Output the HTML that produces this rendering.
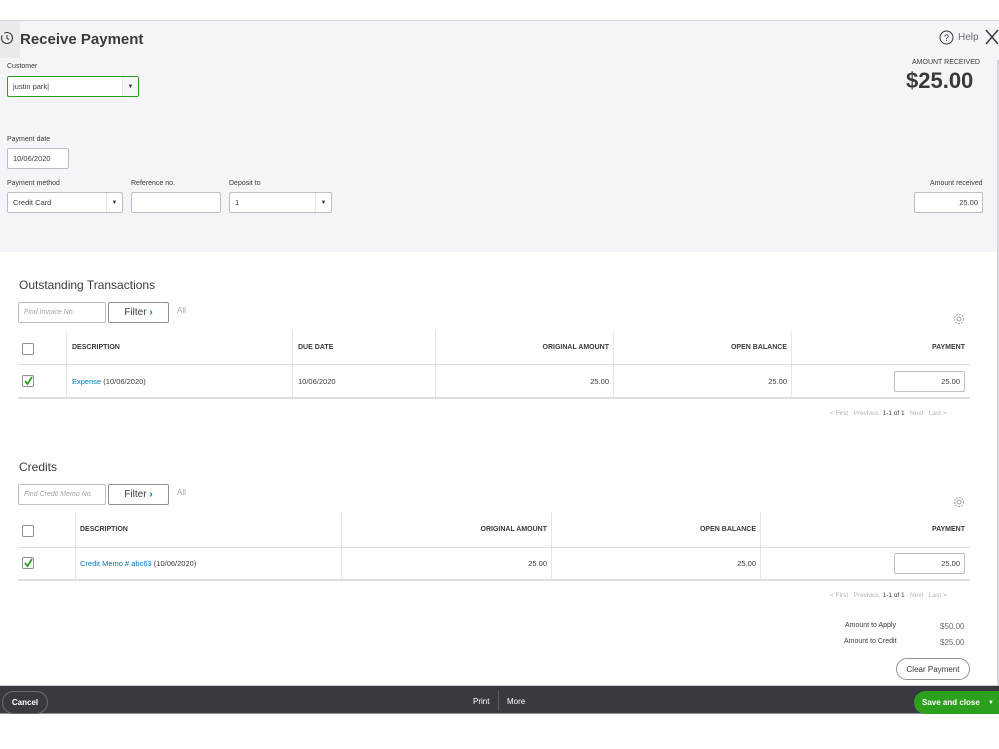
<!DOCTYPE html>
<html><head><meta charset="utf-8"><style>
*{box-sizing:border-box;margin:0;padding:0}
body{width:999px;height:749px;position:relative;overflow:hidden;background:#fff;font-family:"Liberation Sans",sans-serif;color:#393a3d}
.a{position:absolute}
.lbl{font-size:7px;color:#393a3d}
.in{position:absolute;background:#fff;border:1px solid #babec5;border-radius:2px;font-size:7.5px;padding-left:5px;display:flex;align-items:center}
.dd{position:absolute;right:0;top:0;bottom:0;width:16px;border-left:1px solid #e3e5e8;font-size:6px;display:flex;align-items:center;justify-content:center}
.th{position:absolute;font-size:7px;font-weight:bold;color:#393a3d}
.td{position:absolute;font-size:7.5px;color:#393a3d}
.vl{position:absolute;width:1px;background:#e3e5e8}
.hl{position:absolute;height:1px;background:#dcdee2}
.cb{position:absolute;width:12px;height:12px;border:1px solid #8d9096;border-radius:2px;background:#fff}
.lnk{color:#0077c5}
.btn{position:absolute;border:1px solid #8d9096;border-radius:2px;background:#fff;font-size:10px;display:flex;align-items:center;justify-content:center}
.pg{position:absolute;font-size:6.5px;color:#b0b3b8}
</style></head><body>
<div class="a" style="left:0;top:20px;width:999px;height:232px;background:#f4f5f8;border-top:1px solid #d4d7dc"></div>
<div class="a" style="left:0;top:21px;width:20px;height:37px;background:#e8eaee"></div>
<svg class="a" style="left:0;top:30px" width="14" height="16" viewBox="0 0 14 16"><circle cx="7" cy="8" r="5.5" fill="none" stroke="#393a3d" stroke-width="1.1" stroke-dasharray="20 3"/><path d="M7 5v3.5l2 1" fill="none" stroke="#393a3d" stroke-width="1"/></svg>
<div class="a" style="left:20px;top:31px;font-size:15px;font-weight:bold;color:#393a3d">Receive Payment</div>
<svg class="a" style="left:939px;top:30px" width="15" height="15"><circle cx="7.5" cy="7.5" r="6.5" fill="none" stroke="#393a3d" stroke-width="1"/><text x="7.5" y="11" font-size="9" text-anchor="middle" fill="#393a3d" font-family="Liberation Sans">?</text></svg>
<div class="a" style="left:958px;top:32px;font-size:10px;color:#6b6c72">Help</div>
<svg class="a" style="left:985px;top:29px" width="14" height="16"><path d="M1 1L13 15M13 1L1 15" stroke="#393a3d" stroke-width="1.5"/></svg>
<div class="a" style="left:912px;top:59px;font-size:7px;color:#393a3d">AMOUNT RECEIVED</div>
<div class="a" style="left:906px;top:68px;font-size:22px;font-weight:bold;color:#393a3d">$25.00</div>
<div class="a lbl" style="left:7px;top:63px">Customer</div>
<div class="in" style="left:7px;top:76px;width:132px;height:21px;border:1px solid #2ca01c">justin park|<div class="dd" style="background:#f4f5f8">▼</div></div>
<div class="a lbl" style="left:7px;top:136px">Payment date</div>
<div class="in" style="left:7px;top:148px;width:62px;height:21px">10/06/2020</div>
<div class="a lbl" style="left:7px;top:180px">Payment method</div>
<div class="in" style="left:7px;top:192px;width:116px;height:21px">Credit Card<div class="dd">▼</div></div>
<div class="a lbl" style="left:131px;top:180px">Reference no.</div>
<div class="in" style="left:131px;top:192px;width:90px;height:21px"></div>
<div class="a lbl" style="left:229px;top:180px">Deposit to</div>
<div class="in" style="left:229px;top:192px;width:103px;height:21px">1<div class="dd">▼</div></div>
<div class="a lbl" style="left:930px;top:180px">Amount received</div>
<div class="in" style="left:914px;top:192px;width:69px;height:21px;justify-content:flex-end;padding-right:4px">25.00</div>

<div class="a" style="left:19px;top:278px;font-size:12px;color:#393a3d">Outstanding Transactions</div>
<div class="in" style="left:18px;top:302px;width:88px;height:21px;font-style:italic;color:#a0a3a8;font-size:7px">Find Invoice No.</div>
<div class="btn" style="left:108px;top:302px;width:61px;height:21px">Filter&nbsp;<b style="color:#0077c5">›</b></div>
<div class="a" style="left:177px;top:306px;font-size:8px;color:#a0a3a8">All</div>
<svg class="a" style="left:953px;top:313px" width="12" height="12"><circle cx="6" cy="6" r="4.5" fill="none" stroke="#a0a3a8" stroke-width="1" stroke-dasharray="2 1"/><circle cx="6" cy="6" r="2" fill="none" stroke="#a0a3a8"/></svg>
<div class="vl" style="left:66px;top:331px;height:67px"></div>
<div class="vl" style="left:292px;top:331px;height:67px"></div>
<div class="vl" style="left:435px;top:331px;height:67px"></div>
<div class="vl" style="left:613px;top:331px;height:67px"></div>
<div class="vl" style="left:791px;top:331px;height:67px"></div>
<div class="hl" style="left:18px;top:364px;width:952px"></div>
<div class="hl" style="left:18px;top:397px;width:952px;height:2px"></div>
<div class="cb" style="left:22px;top:343px"></div>
<div class="th" style="left:72px;top:344px">DESCRIPTION</div>
<div class="th" style="left:298px;top:344px">DUE DATE</div>
<div class="th" style="right:390px;top:344px">ORIGINAL AMOUNT</div>
<div class="th" style="right:212px;top:344px">OPEN BALANCE</div>
<div class="th" style="right:34px;top:344px">PAYMENT</div>
<div class="cb" style="left:22px;top:375px"><svg width="10" height="10" style="position:absolute;left:0;top:0"><path d="M2 5l2.5 3L9 1" fill="none" stroke="#2ca01c" stroke-width="1.8"/></svg></div>
<div class="td" style="left:72px;top:377px"><span class="lnk">Expense</span> (10/06/2020)</div>
<div class="td" style="left:298px;top:377px">10/06/2020</div>
<div class="td" style="right:390px;top:377px">25.00</div>
<div class="td" style="right:212px;top:377px">25.00</div>
<div class="in" style="left:894px;top:371px;width:71px;height:21px;justify-content:flex-end;padding-right:4px">25.00</div>
<div class="pg" style="left:830px;top:410px">&lt; First &nbsp; Previous &nbsp;<span style="color:#393a3d">1-1 of 1</span> &nbsp; Next &nbsp; Last &gt;</div>

<div class="a" style="left:19px;top:460px;font-size:12px;color:#393a3d">Credits</div>
<div class="in" style="left:18px;top:484px;width:88px;height:21px;font-style:italic;color:#a0a3a8;font-size:7px">Find Credit Memo No.</div>
<div class="btn" style="left:108px;top:484px;width:61px;height:21px">Filter&nbsp;<b style="color:#0077c5">›</b></div>
<div class="a" style="left:177px;top:488px;font-size:8px;color:#a0a3a8">All</div>
<svg class="a" style="left:953px;top:496px" width="12" height="12"><circle cx="6" cy="6" r="4.5" fill="none" stroke="#a0a3a8" stroke-width="1" stroke-dasharray="2 1"/><circle cx="6" cy="6" r="2" fill="none" stroke="#a0a3a8"/></svg>
<div class="vl" style="left:75px;top:513px;height:67px"></div>
<div class="vl" style="left:341px;top:513px;height:67px"></div>
<div class="vl" style="left:551px;top:513px;height:67px"></div>
<div class="vl" style="left:760px;top:513px;height:67px"></div>
<div class="hl" style="left:18px;top:547px;width:952px"></div>
<div class="hl" style="left:18px;top:579px;width:952px;height:2px"></div>
<div class="cb" style="left:22px;top:525px"></div>
<div class="th" style="left:80px;top:526px">DESCRIPTION</div>
<div class="th" style="right:452px;top:526px">ORIGINAL AMOUNT</div>
<div class="th" style="right:243px;top:526px">OPEN BALANCE</div>
<div class="th" style="right:34px;top:526px">PAYMENT</div>
<div class="cb" style="left:22px;top:557px"><svg width="10" height="10" style="position:absolute;left:0;top:0"><path d="M2 5l2.5 3L9 1" fill="none" stroke="#2ca01c" stroke-width="1.8"/></svg></div>
<div class="td" style="left:80px;top:559px"><span class="lnk">Credit Memo # abc63</span> (10/06/2020)</div>
<div class="td" style="right:452px;top:559px">25.00</div>
<div class="td" style="right:243px;top:559px">25.00</div>
<div class="in" style="left:894px;top:553px;width:71px;height:21px;justify-content:flex-end;padding-right:4px">25.00</div>
<div class="pg" style="left:830px;top:592px">&lt; First &nbsp; Previous &nbsp;<span style="color:#393a3d">1-1 of 1</span> &nbsp; Next &nbsp; Last &gt;</div>

<div class="a" style="left:845px;top:622px;font-size:7px">Amount to Apply</div>
<div class="a" style="left:940px;top:622px;font-size:8px;color:#6b6c72">$50.00</div>
<div class="a" style="left:844px;top:638px;font-size:7px">Amount to Credit</div>
<div class="a" style="left:940px;top:638px;font-size:8px;color:#6b6c72">$25.00</div>
<div class="btn" style="left:896px;top:658px;width:74px;height:22px;border-radius:11px;font-size:8px">Clear Payment</div>
<div class="a" style="left:997px;top:60px;width:2px;height:625px;background:#d4d7dc"></div>

<div class="a" style="left:0;top:685px;width:999px;height:29px;background:#393a3f;border-top:1px solid #c8cace;border-bottom:1px solid #8d9096"></div>
<div class="a" style="left:2px;top:691px;width:46px;height:23px;border:1px solid #6b6c72;border-radius:12px;color:#fff;font-size:8px;font-weight:bold;display:flex;align-items:center;justify-content:center">Cancel</div>
<div class="a" style="left:473px;top:697px;color:#fff;font-size:8px">Print</div>
<div class="a" style="left:498px;top:691px;width:1px;height:20px;background:#5a5b60"></div>
<div class="a" style="left:507px;top:697px;color:#fff;font-size:8px">More</div>
<div class="a" style="left:914px;top:691px;width:85px;height:23px;background:#2ca01c;border-radius:12px 0 0 12px;color:#fff;font-size:8px;font-weight:bold;display:flex;align-items:center;padding-left:8px">Save and close<span style="position:absolute;right:5px;font-size:6px">▼</span></div>
</body></html>
